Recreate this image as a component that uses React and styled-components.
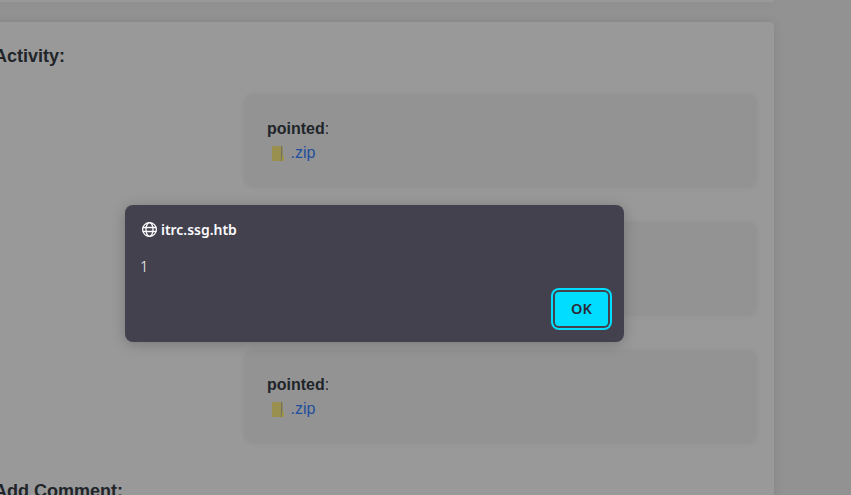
import React from "react";
import styled, { createGlobalStyle } from "styled-components";

const GlobalStyle = createGlobalStyle`
  * { box-sizing: border-box; }
  body {
    margin: 0;
    overflow: hidden;
    background: #929293;
    font-family: "Liberation Sans", Arial, sans-serif;
    font-size: 16px;
    line-height: 24px;
    color: #212529;
  }
`;

const Page = styled.main`
  position: relative;
  width: 851px;
  height: 495px;
  overflow: hidden;
  display: flex;
  flex-direction: column;
  gap: 20px;
`;

const Panel = styled.section`
  width: 784px;
  margin-left: -10px;
  flex: none;
  height: ${(p) => p.$height}px;
  padding: ${(p) => (p.$height > 10 ? "22px 17px 0 4px" : "0")};
  background: #99999a;
  border-radius: ${(p) => (p.$height > 10 ? "4px" : "0 0 4px 4px")};
  box-shadow: 0 0 10px rgba(0, 0, 0, 0.1);
`;

const Heading = styled.h2`
  margin: 0;
  font-size: 18px;
  line-height: 24px;
  font-weight: 700;
`;

const Comments = styled.div`
  display: flex;
  flex-direction: column;
  align-items: flex-end;
  gap: 34px;
  margin: 26px 0 35px;
`;

const Comment = styled.article`
  width: 513px;
  height: 94px;
  padding: 23px;
  border-radius: 10px;
  background: #939394;
  box-shadow: 0 0 5px rgba(0, 0, 0, 0.05);
`;

const Attachment = styled.a`
  display: flex;
  align-items: center;
  color: #1f4f9c;
  text-decoration: none;
`;

const FileIcon = styled.svg`
  width: 14px;
  height: 17px;
  margin: 1px 5.5px 0 4px;
`;

const Dialog = styled.div`
  position: absolute;
  left: 125px;
  top: 205px;
  width: 499px;
  height: 137px;
  padding: 13px 16px 16px 16px;
  display: flex;
  flex-direction: column;
  border-radius: 8px;
  background: #42414d;
  color: #fbfbfe;
  box-shadow: 0 2px 14px rgba(0, 0, 0, 0.22);
  font-family: "Noto Sans", sans-serif;
  font-size: 14px;
`;

const Origin = styled.div`
  display: flex;
  align-items: center;
  gap: 3px;
  height: 24px;
  font-weight: 600;
  font-size: 13.95px;
`;

const Globe = styled.svg`
  width: 17px;
  height: 17px;
  margin-top: -1px;
  fill: none;
  stroke: currentColor;
  stroke-width: 1.3;
`;

const Message = styled.p`
  margin: 12px 0 0 -1px;
  height: 24px;
  font-size: 14.5px;
  font-weight: 300;
`;

const OkButton = styled.button`
  align-self: flex-end;
  margin-top: auto;
  width: 53px;
  height: 34px;
  flex: none;
  padding: 0 0 2px;
  border: 0;
  border-radius: 4px;
  background: #00ddff;
  color: #2b2a33;
  font: 600 14.5px/32px "Noto Sans", sans-serif;
  box-shadow: 0 0 0 2px #42414d, 0 0 0 4px #00ddff;
`;

function ZipComment() {
  return (
    <Comment>
      <div><strong>pointed</strong>:</div>
      <Attachment>
        <FileIcon viewBox="0 0 14 17" aria-hidden="true">
          <path d="M1 1h11v9l1 1v5H1z" fill="#998f4e" />
          <path d="M10 1h1v15h-1z" fill="#75715c" />
          <path d="M11 2h1v9h-1z" fill="#8d8762" />
          <path d="M11 11h2v5h-2z" fill="#a09548" />
        </FileIcon>
        .zip
      </Attachment>
    </Comment>
  );
}

export default function App() {
  return (
    <>
      <GlobalStyle />
      <Page>
        <Panel $height={2} />
        <Panel $height={520}>
          <Heading>Activity:</Heading>
          <Comments>
            <ZipComment />
            <ZipComment />
            <ZipComment />
          </Comments>
          <Heading>Add Comment:</Heading>
        </Panel>
        <Dialog role="dialog">
          <Origin>
            <Globe viewBox="0 0 17 17" aria-hidden="true">
              <circle cx="8.5" cy="8.5" r="6.9" />
              <ellipse cx="8.5" cy="8.5" rx="3.5" ry="6.9" />
              <path d="M1.8 6.5h13.4M1.8 10.5h13.4" />
            </Globe>
            itrc.ssg.htb
          </Origin>
          <Message>1</Message>
          <OkButton>OK</OkButton>
        </Dialog>
      </Page>
    </>
  );
}
